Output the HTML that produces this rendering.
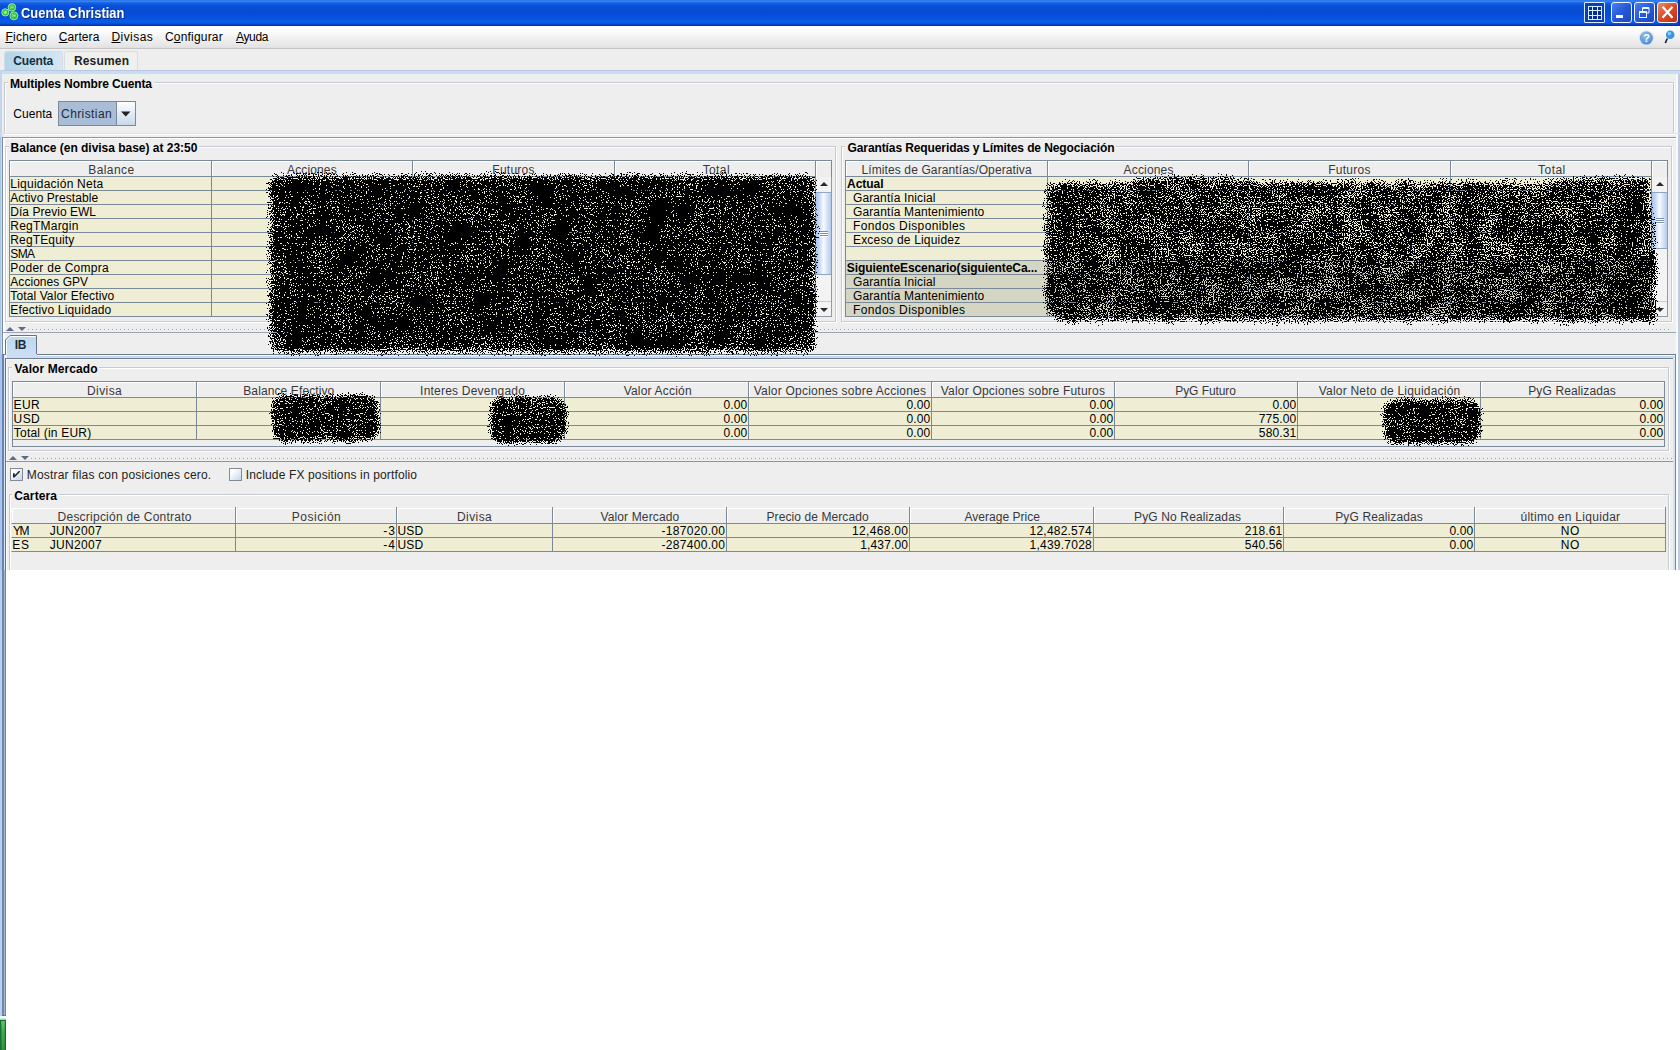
<!DOCTYPE html>
<html><head><meta charset="utf-8"><title>Cuenta Christian</title>
<style>
html,body{margin:0;padding:0;}
body{width:1680px;height:1050px;overflow:hidden;background:#fff;position:relative;font-family:"Liberation Sans",sans-serif;font-size:12px;color:#000;}
div,span{position:absolute;box-sizing:border-box;white-space:pre;}
svg{position:absolute;}
.t{line-height:14px;height:14px;}
.b{font-weight:bold;}
.gb{border:1px solid #c6cbd3;box-shadow:1px 1px 0 #fff, inset 1px 1px 0 #fff;}
.gt{background:#eeeeee;height:14px;}
.vl{background:#7a8a99;width:1px;}
</style></head><body>

<div id="app" style="left:0;top:0;width:1680px;height:570px;background:#eeeeee;"></div>
<div id="titlebar" style="left:0;top:0;width:1680px;height:26px;background:linear-gradient(to bottom,#2468e0 0px,#3a8cf6 1px,#1460e4 3px,#084fd8 6px,#064bd4 12px,#0852de 18px,#0a5cec 22px,#064cd0 24px,#0838b0 25px,#062c98 26px);"></div>
<div style="left:1678px;top:0;width:2px;height:26px;background:#0a34a8;"></div>

<span class="b" style="left:21.48px;top:4px;font-size:14px;line-height:18px;height:18px;color:#fff;text-shadow:1px 1px 0 #0a2a7a;transform:scaleX(0.9226);transform-origin:0 0;">Cuenta Christian</span>
<svg style="left:0;top:0" width="22" height="24" viewBox="0 0 22 24">
<circle cx="11.9" cy="7.4" r="3.8" fill="#2fc22f" stroke="#b4f8dc" stroke-width="0.8"/>
<circle cx="5.3" cy="12.4" r="3.6" fill="#2fc22f" stroke="#b4f8dc" stroke-width="0.8"/>
<circle cx="13.9" cy="15.8" r="4" fill="#2cbc2c" stroke="#b4f8dc" stroke-width="0.8"/>
<circle cx="11.7" cy="7.2" r="1.9" fill="#8cf08c"/><circle cx="5.3" cy="12.4" r="1.8" fill="#8cf08c"/><circle cx="13.7" cy="15.6" r="2" fill="#8cf08c"/>
<path d="M12.8 6.200a1.300 1.300 0 1 0 0 2.200M14.8 14.600a1.300 1.300 0 1 0 0 2.200" stroke="#2fae2f" stroke-width="0.7" fill="none"/>
</svg>

<div style="left:1584px;top:2px;width:21px;height:21px;border:1px solid #d8ecff;border-radius:1px;background:transparent;"></div>
<div style="left:1611px;top:2px;width:21px;height:21px;border:1px solid #f0f6ff;border-radius:3px;background:linear-gradient(135deg,#4a7ef0 0%,#2858d8 50%,#1c48c0 100%);"></div>
<div style="left:1634px;top:2px;width:21px;height:21px;border:1px solid #f0f6ff;border-radius:3px;background:linear-gradient(135deg,#4a7ef0 0%,#2858d8 50%,#1c48c0 100%);"></div>
<div style="left:1657px;top:2px;width:21px;height:21px;border:1px solid #f0f6ff;border-radius:3px;background:linear-gradient(135deg,#f08868 0%,#d84c24 50%,#c03010 100%);"></div>
<div style="left:1585px;top:3px;width:19px;height:19px;background:#0c3eb4;"></div>
<svg style="left:1584px;top:2px" width="21" height="21" viewBox="0 0 21 21"><rect x="4" y="4" width="14" height="14" fill="#0a2c94"/><g stroke="#d4f2ff" stroke-width="1" fill="none"><rect x="4.500" y="4.500" width="13" height="13"/><path d="M8.500 4.500v13M13.500 4.500v13M4.500 8.500h13M4.500 13.500h13"/></g></svg>
<div style="left:1616px;top:15px;width:7px;height:3px;background:#fff;"></div>
<svg style="left:1634px;top:2px" width="21" height="21" viewBox="0 0 21 21"><g stroke="#e8f4ff" stroke-width="1" fill="none"><path d="M8.500 9V5.500H15V11H12.500M8.500 6.500H15"/><rect x="5.500" y="9.500" width="7" height="6"/><path d="M5.500 10.500h7"/></g></svg>
<svg style="left:1657px;top:2px" width="21" height="21" viewBox="0 0 21 21"><path d="M5.500 4.800L15.500 15.800M15.500 4.800L5.500 15.800" stroke="#fff" stroke-width="2.200" fill="none"/></svg>

<div id="menubar" style="left:0;top:26px;width:1680px;height:23px;background:linear-gradient(to bottom,#ffffff 0,#fbfbfb 6px,#eeeeee 14px,#e4e4e4 21px,#dcdcdc 22px);border-bottom:1px solid #c4c4c4;"></div>

<span class="t" style="left:5.4px;top:30px;letter-spacing:0.25px;"><u>F</u>ichero</span>
<span class="t" style="left:58.78px;top:30px;letter-spacing:0.1px;"><u>C</u>artera</span>
<span class="t" style="left:111.4px;top:30px;letter-spacing:0.46px;"><u>D</u>ivisas</span>
<span class="t" style="left:164.98px;top:30px;letter-spacing:0.19px;">C<u>o</u>nfigurar</span>
<span class="t" style="left:236px;top:30px;letter-spacing:-0.35px;"><u>A</u>yuda</span>
<svg style="left:1637px;top:29px" width="20" height="20" viewBox="0 0 20 20"><defs><radialGradient id="hg" cx="0.4" cy="0.3" r="0.8"><stop offset="0" stop-color="#8cbcec"/><stop offset="1" stop-color="#4a86cc"/></radialGradient></defs><circle cx="9.400" cy="9.100" r="7.600" fill="#dfe3ea"/><circle cx="9.400" cy="9.100" r="6.500" fill="url(#hg)"/><text x="9.400" y="13.200" font-family="Liberation Sans" font-weight="bold" font-size="11.500" fill="#fff" text-anchor="middle">?</text></svg>
<svg style="left:1660px;top:28px" width="18" height="20" viewBox="0 0 18 20"><circle cx="10.200" cy="6.800" r="4.300" fill="#3a96e4"/><circle cx="9.400" cy="5.600" r="1.800" fill="#8ccaf8"/><path d="M7.300 10.500L5.300 15" stroke="#1a2030" stroke-width="1.700"/></svg>

<div style="left:4px;top:51px;width:59px;height:20px;border:1px solid #d4dce8;border-bottom:none;border-radius:3px 3px 0 0;background:linear-gradient(to right,#b3d4e9,#d6e6f2);"></div>
<div style="left:64px;top:51px;width:74px;height:20px;border:1px solid #d8dce4;border-bottom:none;border-radius:3px 3px 0 0;background:#f0f0ee;"></div>

<span class="t b" style="left:13.3px;top:54px;letter-spacing:-0.15px;color:#12303f;">Cuenta</span>
<span class="t b" style="left:73.89px;top:54px;letter-spacing:0.19px;color:#222;">Resumen</span>
<div style="left:0;top:70px;width:1680px;height:7px;background:linear-gradient(to bottom,#b9c9dd 0,#b9c9dd 1px,#ccdaf5 1px,#ccdaf5 4px,#e6f2f0 4px,#ecf0ea 7px);"></div>
<div style="left:0;top:70px;width:2px;height:67px;background:#c5d5ee;"></div>
<div style="left:0;top:137px;width:1px;height:221px;background:#aac6e2;"></div>
<div style="left:1px;top:137px;width:1px;height:221px;background:#c4dcf0;"></div>
<div style="left:0;top:354px;width:2px;height:662px;background:#a8c4f0;"></div>
<div style="left:2px;top:354px;width:2px;height:662px;background:#6b82a8;"></div>
<div style="left:4px;top:358px;width:1px;height:212px;background:#d8e4f8;"></div>
<div style="left:5px;top:358px;width:1px;height:212px;background:#63748c;"></div>
<div style="left:6px;top:359px;width:1px;height:211px;background:#fbfdff;"></div>
<div style="left:1676px;top:74px;width:2px;height:496px;background:#f6fbff;"></div>
<div style="left:1678px;top:74px;width:2px;height:496px;background:#c0ccdc;"></div>
<div style="left:1673px;top:359px;width:2px;height:211px;background:#d6e2ee;"></div>
<div style="left:1675px;top:354px;width:1px;height:216px;background:#7088a0;"></div>

<div class="gb" style="left:4px;top:82px;width:1670px;height:52px;"></div>
<div class="gt" style="left:8px;top:77px;width:146px;"></div>
<span class="t b" style="left:9.99px;top:77px;letter-spacing:-0.12px;">Multiples Nombre Cuenta</span>
<span class="t" style="left:13.18px;top:107px;letter-spacing:0.07px;">Cuenta</span>
<div style="left:58px;top:101px;width:78px;height:25px;border:1px solid #7a8a99;background:linear-gradient(to bottom,#fdfeff,#c8d8ea);"></div>
<div style="left:59px;top:102px;width:58px;height:23px;background:#a9bdd6;border-right:1px solid #7a8a99;"></div>
<span class="t" style="left:61.08px;top:107px;letter-spacing:0.4px;color:#1a2a3a;">Christian</span>
<svg style="left:120px;top:111px" width="12" height="7" viewBox="0 0 12 7"><path d="M1 0.5h9.500L5.75 5.5z" fill="#222"/></svg>

<div style="left:0px;top:133px;width:1680px;height:1px;background:#dde2ea;"></div>
<div style="left:2px;top:137px;width:1674px;height:1px;background:#8a98a8;"></div>
<div style="left:3px;top:138px;width:1673px;height:1px;background:#fff;"></div>
<div style="left:2px;top:137px;width:1px;height:217px;background:#7a8ca4;"></div>
<div style="left:3px;top:138px;width:2px;height:216px;background:#fff;"></div>

<div class="gb" style="left:5px;top:146px;width:831px;height:176px;"></div>
<div class="gt" style="left:9px;top:141px;width:190px;"></div>
<span class="t b" style="left:10.59px;top:141px;letter-spacing:-0.02px;">Balance (en divisa base) at 23:50</span>
<div style="left:9px;top:160px;width:807px;height:17px;background:#eeeeee;border-top:1px solid #7a8a99;border-left:1px solid #7a8a99;border-bottom:1px solid #7a8a99;"></div>
<div style="left:10px;top:161px;width:201px;height:15px;border-left:1px solid #fff;border-top:1px solid #fff;"></div>
<div class="vl" style="left:211px;top:160px;height:17px;"></div>
<span class="t" style="left:88.3px;top:163px;letter-spacing:0.41px;color:#383838;">Balance</span>
<div style="left:212px;top:161px;width:200px;height:15px;border-left:1px solid #fff;border-top:1px solid #fff;"></div>
<div class="vl" style="left:412px;top:160px;height:17px;"></div>
<span class="t" style="left:287px;top:163px;letter-spacing:0.14px;color:#383838;">Acciones</span>
<div style="left:413px;top:161px;width:201px;height:15px;border-left:1px solid #fff;border-top:1px solid #fff;"></div>
<div class="vl" style="left:614px;top:160px;height:17px;"></div>
<span class="t" style="left:492.3px;top:163px;letter-spacing:0.26px;color:#383838;">Futuros</span>
<div style="left:615px;top:161px;width:200px;height:15px;border-left:1px solid #fff;border-top:1px solid #fff;"></div>
<div class="vl" style="left:815px;top:160px;height:17px;"></div>
<span class="t" style="left:702.65px;top:163px;letter-spacing:0.4px;color:#383838;">Total</span>
<div style="left:9px;top:177px;width:807px;height:14px;background:#efeed4;border-bottom:1px solid #7a8a99;border-left:1px solid #7a8a99;"></div>
<span class="t" style="left:10.3px;top:177px;letter-spacing:0.23px;">Liquidación Neta</span>
<div style="left:9px;top:191px;width:807px;height:14px;background:#efeed4;border-bottom:1px solid #7a8a99;border-left:1px solid #7a8a99;"></div>
<span class="t" style="left:10.3px;top:191px;letter-spacing:0.07px;">Activo Prestable</span>
<div style="left:9px;top:205px;width:807px;height:14px;background:#efeed4;border-bottom:1px solid #7a8a99;border-left:1px solid #7a8a99;"></div>
<span class="t" style="left:10.3px;top:205px;letter-spacing:0.03px;">Día Previo EWL</span>
<div style="left:9px;top:219px;width:807px;height:14px;background:#efeed4;border-bottom:1px solid #7a8a99;border-left:1px solid #7a8a99;"></div>
<span class="t" style="left:10.3px;top:219px;letter-spacing:0.22px;">RegTMargin</span>
<div style="left:9px;top:233px;width:807px;height:14px;background:#efeed4;border-bottom:1px solid #7a8a99;border-left:1px solid #7a8a99;"></div>
<span class="t" style="left:10.3px;top:233px;letter-spacing:0.14px;">RegTEquity</span>
<div style="left:9px;top:247px;width:807px;height:14px;background:#efeed4;border-bottom:1px solid #7a8a99;border-left:1px solid #7a8a99;"></div>
<span class="t" style="left:10.3px;top:247px;letter-spacing:-0.65px;">SMA</span>
<div style="left:9px;top:261px;width:807px;height:14px;background:#efeed4;border-bottom:1px solid #7a8a99;border-left:1px solid #7a8a99;"></div>
<span class="t" style="left:10.3px;top:261px;letter-spacing:0.26px;">Poder de Compra</span>
<div style="left:9px;top:275px;width:807px;height:14px;background:#efeed4;border-bottom:1px solid #7a8a99;border-left:1px solid #7a8a99;"></div>
<span class="t" style="left:10.3px;top:275px;letter-spacing:0.04px;">Acciones GPV</span>
<div style="left:9px;top:289px;width:807px;height:14px;background:#efeed4;border-bottom:1px solid #7a8a99;border-left:1px solid #7a8a99;"></div>
<span class="t" style="left:10.3px;top:289px;letter-spacing:0.11px;">Total Valor Efectivo</span>
<div style="left:9px;top:303px;width:807px;height:14px;background:#efeed4;border-bottom:1px solid #7a8a99;border-left:1px solid #7a8a99;"></div>
<span class="t" style="left:10.3px;top:303px;letter-spacing:0.17px;">Efectivo Liquidado</span>
<div class="vl" style="left:211px;top:177px;height:140px;"></div>
<div class="vl" style="left:412px;top:177px;height:140px;"></div>
<div class="vl" style="left:614px;top:177px;height:140px;"></div>
<div class="vl" style="left:815px;top:177px;height:140px;"></div>
<div style="left:816px;top:160px;width:16px;height:157px;background:#f3f3f3;border-right:1px solid #8d9bab;border-bottom:1px solid #8d9bab;"></div><div style="left:816px;top:160px;width:16px;height:17px;background:#eeeeee;border-top:1px solid #7a8a99;border-right:1px solid #7a8a99;"></div><div style="left:816px;top:161px;width:15px;height:16px;border-top:1px solid #fff;border-left:1px solid #fff;"></div><svg style="left:820px;top:182px" width="8" height="4" viewBox="0 0 8 4"><path d="M0 4L4 0L8 4z" fill="#2a2a2a"/></svg><svg style="left:820px;top:308px" width="8" height="4" viewBox="0 0 8 4"><path d="M0 0L4 4L8 0z" fill="#2a2a2a"/></svg><div style="left:816px;top:301px;width:15px;height:1px;background:#c8ccd4;"></div><div style="left:816px;top:192px;width:15px;height:83px;border-top:1px solid #8fa6c8;border-bottom:1px solid #8fa6c8;background:linear-gradient(to right,#a9c3ec 0,#c9dbf5 25%,#f8faff 50%,#d4e2f6 75%,#b4c9ea 100%);"></div><div style="left:820px;top:231px;width:8px;height:1px;background:#7a8eae;"></div><div style="left:820px;top:232px;width:8px;height:1px;background:#fff;"></div><div style="left:820px;top:233px;width:8px;height:1px;background:#7a8eae;"></div><div style="left:820px;top:234px;width:8px;height:1px;background:#fff;"></div><div style="left:820px;top:235px;width:8px;height:1px;background:#7a8eae;"></div><div style="left:820px;top:236px;width:8px;height:1px;background:#fff;"></div>
<div class="gb" style="left:841px;top:146px;width:831px;height:176px;"></div>
<div class="gt" style="left:845px;top:141px;width:271px;"></div>
<span class="t b" style="left:847.5px;top:141px;letter-spacing:-0.1px;">Garantías Requeridas y Límites de Negociación</span>
<div style="left:845px;top:160px;width:807px;height:17px;background:#eeeeee;border-top:1px solid #7a8a99;border-left:1px solid #7a8a99;border-bottom:1px solid #7a8a99;"></div>
<div style="left:846px;top:161px;width:201px;height:15px;border-left:1px solid #fff;border-top:1px solid #fff;"></div>
<div class="vl" style="left:1047px;top:160px;height:17px;"></div>
<span class="t" style="left:861.4px;top:163px;letter-spacing:0.12px;color:#383838;">Límites de Garantías/Operativa</span>
<div style="left:1048px;top:161px;width:200px;height:15px;border-left:1px solid #fff;border-top:1px solid #fff;"></div>
<div class="vl" style="left:1248px;top:160px;height:17px;"></div>
<span class="t" style="left:1123.6px;top:163px;letter-spacing:0.16px;color:#383838;">Acciones</span>
<div style="left:1249px;top:161px;width:201px;height:15px;border-left:1px solid #fff;border-top:1px solid #fff;"></div>
<div class="vl" style="left:1450px;top:160px;height:17px;"></div>
<span class="t" style="left:1328.25px;top:163px;letter-spacing:0.25px;color:#383838;">Futuros</span>
<div style="left:1451px;top:161px;width:200px;height:15px;border-left:1px solid #fff;border-top:1px solid #fff;"></div>
<div class="vl" style="left:1651px;top:160px;height:17px;"></div>
<span class="t" style="left:1538px;top:163px;letter-spacing:0.48px;color:#383838;">Total</span>
<div style="left:845px;top:177px;width:807px;height:14px;background:#efeed4;border-bottom:1px solid #7a8a99;border-left:1px solid #7a8a99;"></div>
<span class="t b" style="left:847px;top:177px;letter-spacing:-0.04px;">Actual</span>
<div style="left:845px;top:191px;width:807px;height:14px;background:#efeed4;border-bottom:1px solid #7a8a99;border-left:1px solid #7a8a99;"></div>
<span class="t" style="left:853px;top:191px;letter-spacing:0.11px;">Garantía Inicial</span>
<div style="left:845px;top:205px;width:807px;height:14px;background:#efeed4;border-bottom:1px solid #7a8a99;border-left:1px solid #7a8a99;"></div>
<span class="t" style="left:853px;top:205px;letter-spacing:0.12px;">Garantía Mantenimiento</span>
<div style="left:845px;top:219px;width:807px;height:14px;background:#efeed4;border-bottom:1px solid #7a8a99;border-left:1px solid #7a8a99;"></div>
<span class="t" style="left:853px;top:219px;letter-spacing:0.39px;">Fondos Disponibles</span>
<div style="left:845px;top:233px;width:807px;height:14px;background:#efeed4;border-bottom:1px solid #7a8a99;border-left:1px solid #7a8a99;"></div>
<span class="t" style="left:853px;top:233px;letter-spacing:0.18px;">Exceso de Liquidez</span>
<div style="left:845px;top:247px;width:807px;height:14px;background:#efeed4;border-bottom:1px solid #7a8a99;border-left:1px solid #7a8a99;"></div>
<div style="left:845px;top:261px;width:807px;height:14px;background:#d5d5c3;border-bottom:1px solid #7a8a99;border-left:1px solid #7a8a99;"></div>
<span class="t b" style="left:846.8px;top:261px;letter-spacing:-0.09px;">SiguienteEscenario(siguienteCa...</span>
<div style="left:845px;top:275px;width:807px;height:14px;background:#d5d5c3;border-bottom:1px solid #7a8a99;border-left:1px solid #7a8a99;"></div>
<span class="t" style="left:853px;top:275px;letter-spacing:0.11px;">Garantía Inicial</span>
<div style="left:845px;top:289px;width:807px;height:14px;background:#d5d5c3;border-bottom:1px solid #7a8a99;border-left:1px solid #7a8a99;"></div>
<span class="t" style="left:853px;top:289px;letter-spacing:0.12px;">Garantía Mantenimiento</span>
<div style="left:845px;top:303px;width:807px;height:14px;background:#d5d5c3;border-bottom:1px solid #7a8a99;border-left:1px solid #7a8a99;"></div>
<span class="t" style="left:853px;top:303px;letter-spacing:0.39px;">Fondos Disponibles</span>
<div class="vl" style="left:1047px;top:177px;height:140px;"></div>
<div class="vl" style="left:1248px;top:177px;height:140px;"></div>
<div class="vl" style="left:1450px;top:177px;height:140px;"></div>
<div class="vl" style="left:1651px;top:177px;height:140px;"></div>
<div style="left:1652px;top:160px;width:16px;height:157px;background:#f3f3f3;border-right:1px solid #8d9bab;border-bottom:1px solid #8d9bab;"></div><div style="left:1652px;top:160px;width:16px;height:17px;background:#eeeeee;border-top:1px solid #7a8a99;border-right:1px solid #7a8a99;"></div><div style="left:1652px;top:161px;width:15px;height:16px;border-top:1px solid #fff;border-left:1px solid #fff;"></div><svg style="left:1656px;top:182px" width="8" height="4" viewBox="0 0 8 4"><path d="M0 4L4 0L8 4z" fill="#2a2a2a"/></svg><svg style="left:1656px;top:308px" width="8" height="4" viewBox="0 0 8 4"><path d="M0 0L4 4L8 0z" fill="#2a2a2a"/></svg><div style="left:1652px;top:301px;width:15px;height:1px;background:#c8ccd4;"></div><div style="left:1652px;top:192px;width:15px;height:57px;border-top:1px solid #8fa6c8;border-bottom:1px solid #8fa6c8;background:linear-gradient(to right,#a9c3ec 0,#c9dbf5 25%,#f8faff 50%,#d4e2f6 75%,#b4c9ea 100%);"></div><div style="left:1656px;top:218px;width:8px;height:1px;background:#7a8eae;"></div><div style="left:1656px;top:219px;width:8px;height:1px;background:#fff;"></div><div style="left:1656px;top:220px;width:8px;height:1px;background:#7a8eae;"></div><div style="left:1656px;top:221px;width:8px;height:1px;background:#fff;"></div><div style="left:1656px;top:222px;width:8px;height:1px;background:#7a8eae;"></div><div style="left:1656px;top:223px;width:8px;height:1px;background:#fff;"></div>
<div style="left:28px;top:329px;width:1644px;height:1px;background:repeating-linear-gradient(to right,#9aa2ae 0,#9aa2ae 1px,transparent 1px,transparent 4px);"></div><svg style="left:6px;top:326px" width="22" height="6" viewBox="0 0 22 6"><path d="M0 5L4 1L8 5z" fill="#5a6a8a"/><path d="M12 1L16 5L20 1z" fill="#5a6a8a"/></svg>
<div style="left:3px;top:332px;width:1673px;height:1px;background:#9aa6b4;"></div>
<div style="left:7px;top:336px;width:30px;height:22px;background:linear-gradient(to bottom,#bedaf0,#c8ddf3 70%,#cfdcf4);clip-path:polygon(3px 0,100% 0,100% 100%,0 100%,0 3px);"></div>
<svg style="left:5px;top:335px" width="33" height="24" viewBox="0 0 33 24"><path d="M0.5 19V5L5 0.5H31.5V19" stroke="#63748c" fill="none"/><path d="M1.500 19V5.500L5.500 1.500H30.5" stroke="#fbfdff" fill="none"/></svg>
<div style="left:2px;top:354px;width:4px;height:1px;background:#6b82a8;"></div>
<div style="left:37px;top:354px;width:1639px;height:1px;background:#6c7b8c;"></div>
<div style="left:37px;top:355px;width:1638px;height:1px;background:#f0fbff;"></div>
<div style="left:37px;top:356px;width:1638px;height:2px;background:#c9dbf2;"></div>
<div style="left:5px;top:358px;width:1668px;height:1px;background:#6e8098;"></div>
<div style="left:6px;top:359px;width:1667px;height:1px;background:#f2f8ff;"></div>

<span class="t b" style="left:14.79px;top:338px;letter-spacing:-0.33px;color:#1a2a3a;">IB</span>
<div class="gb" style="left:8px;top:367px;width:1661px;height:84px;"></div>
<div class="gt" style="left:12px;top:362px;width:87px;"></div>
<span class="t b" style="left:14.44px;top:362px;letter-spacing:0.09px;">Valor Mercado</span>
<div style="left:12px;top:381px;width:1653px;height:66px;border:1px solid #7a8a99;"></div>
<div style="left:12px;top:381px;width:1653px;height:17px;background:#eeeeee;border-top:1px solid #7a8a99;border-left:1px solid #7a8a99;border-bottom:1px solid #7a8a99;"></div>
<div style="left:13px;top:382px;width:183px;height:15px;border-left:1px solid #fff;border-top:1px solid #fff;"></div>
<div class="vl" style="left:196px;top:381px;height:17px;"></div>
<span class="t" style="left:87px;top:384px;letter-spacing:0.41px;color:#383838;">Divisa</span>
<div style="left:197px;top:382px;width:183px;height:15px;border-left:1px solid #fff;border-top:1px solid #fff;"></div>
<div class="vl" style="left:380px;top:381px;height:17px;"></div>
<span class="t" style="left:243.25px;top:384px;letter-spacing:0.11px;color:#383838;">Balance Efectivo</span>
<div style="left:381px;top:382px;width:183px;height:15px;border-left:1px solid #fff;border-top:1px solid #fff;"></div>
<div class="vl" style="left:564px;top:381px;height:17px;"></div>
<span class="t" style="left:420.12px;top:384px;letter-spacing:0.21px;color:#383838;">Interes Devengado</span>
<div style="left:565px;top:382px;width:183px;height:15px;border-left:1px solid #fff;border-top:1px solid #fff;"></div>
<div class="vl" style="left:748px;top:381px;height:17px;"></div>
<span class="t" style="left:623.69px;top:384px;letter-spacing:0.19px;color:#383838;">Valor Acción</span>
<div style="left:749px;top:382px;width:182px;height:15px;border-left:1px solid #fff;border-top:1px solid #fff;"></div>
<div class="vl" style="left:931px;top:381px;height:17px;"></div>
<span class="t" style="left:753.69px;top:384px;letter-spacing:0.23px;color:#383838;">Valor Opciones sobre Acciones</span>
<div style="left:932px;top:382px;width:182px;height:15px;border-left:1px solid #fff;border-top:1px solid #fff;"></div>
<div class="vl" style="left:1114px;top:381px;height:17px;"></div>
<span class="t" style="left:940.69px;top:384px;letter-spacing:0.21px;color:#383838;">Valor Opciones sobre Futuros</span>
<div style="left:1115px;top:382px;width:182px;height:15px;border-left:1px solid #fff;border-top:1px solid #fff;"></div>
<div class="vl" style="left:1297px;top:381px;height:17px;"></div>
<span class="t" style="left:1175.25px;top:384px;letter-spacing:-0.07px;color:#383838;">PyG Futuro</span>
<div style="left:1298px;top:382px;width:182px;height:15px;border-left:1px solid #fff;border-top:1px solid #fff;"></div>
<div class="vl" style="left:1480px;top:381px;height:17px;"></div>
<span class="t" style="left:1318.69px;top:384px;letter-spacing:0.21px;color:#383838;">Valor Neto de Liquidación</span>
<div style="left:1481px;top:382px;width:183px;height:15px;border-left:1px solid #fff;border-top:1px solid #fff;"></div>
<div class="vl" style="left:1664px;top:381px;height:17px;"></div>
<span class="t" style="left:1528.25px;top:384px;letter-spacing:0.12px;color:#383838;">PyG Realizadas</span>
<div style="left:12px;top:398px;width:1653px;height:14px;background:#efeed4;border-bottom:1px solid #7a8a99;border-left:1px solid #7a8a99;"></div>
<span class="t" style="left:13.6px;top:398px;letter-spacing:0.42px;">EUR</span>
<span class="t" style="left:723.38px;top:398px;letter-spacing:0.15px;">0.00</span>
<span class="t" style="left:906.38px;top:398px;letter-spacing:0.15px;">0.00</span>
<span class="t" style="left:1089.38px;top:398px;letter-spacing:0.15px;">0.00</span>
<span class="t" style="left:1272.38px;top:398px;letter-spacing:0.15px;">0.00</span>
<span class="t" style="left:1639.38px;top:398px;letter-spacing:0.15px;">0.00</span>
<div style="left:12px;top:412px;width:1653px;height:14px;background:#efeed4;border-bottom:1px solid #7a8a99;border-left:1px solid #7a8a99;"></div>
<span class="t" style="left:13.6px;top:412px;letter-spacing:0.42px;">USD</span>
<span class="t" style="left:723.38px;top:412px;letter-spacing:0.15px;">0.00</span>
<span class="t" style="left:906.38px;top:412px;letter-spacing:0.15px;">0.00</span>
<span class="t" style="left:1089.38px;top:412px;letter-spacing:0.15px;">0.00</span>
<span class="t" style="left:1258.76px;top:412px;letter-spacing:0.15px;">775.00</span>
<span class="t" style="left:1639.38px;top:412px;letter-spacing:0.15px;">0.00</span>
<div style="left:12px;top:426px;width:1653px;height:14px;background:#efeed4;border-bottom:1px solid #7a8a99;border-left:1px solid #7a8a99;"></div>
<span class="t" style="left:13.8px;top:426px;letter-spacing:0.21px;">Total (in EUR)</span>
<span class="t" style="left:723.38px;top:426px;letter-spacing:0.15px;">0.00</span>
<span class="t" style="left:906.38px;top:426px;letter-spacing:0.15px;">0.00</span>
<span class="t" style="left:1089.38px;top:426px;letter-spacing:0.15px;">0.00</span>
<span class="t" style="left:1258.82px;top:426px;letter-spacing:0.15px;">580.31</span>
<span class="t" style="left:1639.38px;top:426px;letter-spacing:0.15px;">0.00</span>
<div class="vl" style="left:196px;top:398px;height:42px;"></div>
<div class="vl" style="left:380px;top:398px;height:42px;"></div>
<div class="vl" style="left:564px;top:398px;height:42px;"></div>
<div class="vl" style="left:748px;top:398px;height:42px;"></div>
<div class="vl" style="left:931px;top:398px;height:42px;"></div>
<div class="vl" style="left:1114px;top:398px;height:42px;"></div>
<div class="vl" style="left:1297px;top:398px;height:42px;"></div>
<div class="vl" style="left:1480px;top:398px;height:42px;"></div>
<div class="vl" style="left:1664px;top:398px;height:42px;"></div>
<div style="left:31px;top:458px;width:1641px;height:1px;background:repeating-linear-gradient(to right,#9aa2ae 0,#9aa2ae 1px,transparent 1px,transparent 4px);"></div><svg style="left:9px;top:455px" width="22" height="6" viewBox="0 0 22 6"><path d="M0 5L4 1L8 5z" fill="#5a6a8a"/><path d="M12 1L16 5L20 1z" fill="#5a6a8a"/></svg>
<div style="left:6px;top:461px;width:1667px;height:1px;background:#8a96a6;"></div>
<div style="left:10px;top:468px;width:13px;height:13px;border:1px solid #858a92;background:linear-gradient(135deg,#ffffff 20%,#c4d6ea);"></div>
<svg style="left:10px;top:468px" width="13" height="13" viewBox="0 0 13 13"><path d="M3 5.200V9.600H4.500L9.900 4V3H8.800L4.700 7.300V5.200Z" fill="#16262c"/></svg>
<div style="left:229px;top:468px;width:13px;height:13px;border:1px solid #858a92;background:linear-gradient(135deg,#ffffff 20%,#c4d6ea);"></div>

<span class="t" style="left:26.8px;top:468px;letter-spacing:0.19px;color:#222;">Mostrar filas con posiciones cero.</span>
<span class="t" style="left:245.78px;top:468px;letter-spacing:0.14px;color:#222;">Include FX positions in portfolio</span>
<div class="gb" style="left:9px;top:494px;width:1660px;height:80px;border-bottom:none;"></div>
<div class="gt" style="left:12px;top:489px;width:47px;"></div>
<span class="t b" style="left:14.3px;top:489px;letter-spacing:0.11px;">Cartera</span>
<div style="left:11px;top:507px;width:1655px;height:17px;background:#eeeeee;border-top:1px solid #eeeeee;border-left:1px solid #eeeeee;border-bottom:1px solid #7a8a99;"></div>
<div style="left:12px;top:508px;width:223px;height:15px;border-left:1px solid #fff;border-top:1px solid #fff;"></div>
<div class="vl" style="left:235px;top:507px;height:17px;"></div>
<span class="t" style="left:57.6px;top:510px;letter-spacing:0.23px;color:#383838;">Descripción de Contrato</span>
<div style="left:236px;top:508px;width:160px;height:15px;border-left:1px solid #fff;border-top:1px solid #fff;"></div>
<div class="vl" style="left:396px;top:507px;height:17px;"></div>
<span class="t" style="left:291.8px;top:510px;letter-spacing:0.52px;color:#383838;">Posición</span>
<div style="left:397px;top:508px;width:155px;height:15px;border-left:1px solid #fff;border-top:1px solid #fff;"></div>
<div class="vl" style="left:552px;top:507px;height:17px;"></div>
<span class="t" style="left:457px;top:510px;letter-spacing:0.41px;color:#383838;">Divisa</span>
<div style="left:553px;top:508px;width:173px;height:15px;border-left:1px solid #fff;border-top:1px solid #fff;"></div>
<div class="vl" style="left:726px;top:507px;height:17px;"></div>
<span class="t" style="left:600.44px;top:510px;letter-spacing:0.14px;color:#383838;">Valor Mercado</span>
<div style="left:727px;top:508px;width:182px;height:15px;border-left:1px solid #fff;border-top:1px solid #fff;"></div>
<div class="vl" style="left:909px;top:507px;height:17px;"></div>
<span class="t" style="left:766.5px;top:510px;letter-spacing:0.09px;color:#383838;">Precio de Mercado</span>
<div style="left:910px;top:508px;width:183px;height:15px;border-left:1px solid #fff;border-top:1px solid #fff;"></div>
<div class="vl" style="left:1093px;top:507px;height:17px;"></div>
<span class="t" style="left:964.5px;top:510px;letter-spacing:0.03px;color:#383838;">Average Price</span>
<div style="left:1094px;top:508px;width:189px;height:15px;border-left:1px solid #fff;border-top:1px solid #fff;"></div>
<div class="vl" style="left:1283px;top:507px;height:17px;"></div>
<span class="t" style="left:1134px;top:510px;letter-spacing:0.14px;color:#383838;">PyG No Realizadas</span>
<div style="left:1284px;top:508px;width:190px;height:15px;border-left:1px solid #fff;border-top:1px solid #fff;"></div>
<div class="vl" style="left:1474px;top:507px;height:17px;"></div>
<span class="t" style="left:1335.25px;top:510px;letter-spacing:0.12px;color:#383838;">PyG Realizadas</span>
<div style="left:1475px;top:508px;width:190px;height:15px;border-left:1px solid #fff;border-top:1px solid #fff;"></div>
<div class="vl" style="left:1665px;top:507px;height:17px;"></div>
<span class="t" style="left:1520.44px;top:510px;letter-spacing:0.29px;color:#383838;">último en Liquidar</span>
<div style="left:11px;top:524px;width:1655px;height:14px;background:#efeed4;border-bottom:1px solid #7a8a99;border-left:1px solid #eeeeee;"></div>
<span class="t" style="left:13.05px;top:524px;letter-spacing:-1.65px;">YM</span>
<span class="t" style="left:383.25px;top:524px;letter-spacing:1.12px;">-3</span>
<span class="t" style="left:397.46px;top:524px;letter-spacing:0.15px;">USD</span>
<span class="t" style="left:661.5px;top:524px;letter-spacing:0.31px;">-187020.00</span>
<span class="t" style="left:852.06px;top:524px;letter-spacing:0.32px;">12,468.00</span>
<span class="t" style="left:1029.56px;top:524px;letter-spacing:0.22px;">12,482.574</span>
<span class="t" style="left:1244.82px;top:524px;letter-spacing:0.15px;">218.61</span>
<span class="t" style="left:1449.38px;top:524px;letter-spacing:0.15px;">0.00</span>
<span class="t" style="left:1560.75px;top:524px;letter-spacing:0.56px;">NO</span>
<div style="left:11px;top:538px;width:1655px;height:14px;background:#efeed4;border-bottom:1px solid #7a8a99;border-left:1px solid #eeeeee;"></div>
<span class="t" style="left:12.3px;top:538px;letter-spacing:0.66px;">ES</span>
<span class="t" style="left:383.25px;top:538px;letter-spacing:0.94px;">-4</span>
<span class="t" style="left:397.46px;top:538px;letter-spacing:0.15px;">USD</span>
<span class="t" style="left:661.5px;top:538px;letter-spacing:0.31px;">-287400.00</span>
<span class="t" style="left:860.31px;top:538px;letter-spacing:0.13px;">1,437.00</span>
<span class="t" style="left:1029.56px;top:538px;letter-spacing:0.24px;">1,439.7028</span>
<span class="t" style="left:1244.82px;top:538px;letter-spacing:0.15px;">540.56</span>
<span class="t" style="left:1449.38px;top:538px;letter-spacing:0.15px;">0.00</span>
<span class="t" style="left:1560.75px;top:538px;letter-spacing:0.56px;">NO</span>
<div class="vl" style="left:235px;top:524px;height:28px;"></div>
<div class="vl" style="left:396px;top:524px;height:28px;"></div>
<div class="vl" style="left:552px;top:524px;height:28px;"></div>
<div class="vl" style="left:726px;top:524px;height:28px;"></div>
<div class="vl" style="left:909px;top:524px;height:28px;"></div>
<div class="vl" style="left:1093px;top:524px;height:28px;"></div>
<div class="vl" style="left:1283px;top:524px;height:28px;"></div>
<div class="vl" style="left:1474px;top:524px;height:28px;"></div>
<div class="vl" style="left:1665px;top:524px;height:28px;"></div>
<span class="t" style="left:49.81px;top:524px;letter-spacing:0.29px;">JUN2007</span>
<span class="t" style="left:49.81px;top:538px;letter-spacing:0.29px;">JUN2007</span>
<svg id="spray" style="left:0;top:0" width="1680" height="600" viewBox="0 0 1680 600"><defs>
<filter id="sp1" filterUnits="userSpaceOnUse" x="0" y="150" width="1680" height="320" color-interpolation-filters="sRGB">
<feGaussianBlur in="SourceAlpha" stdDeviation="4.5" result="A"/>
<feTurbulence type="fractalNoise" baseFrequency="0.83" numOctaves="1" seed="7" result="T"/>
<feColorMatrix in="T" type="matrix" values="0 0 0 0 0  0 0 0 0 0  0 0 0 0 0  3 0 0 0 -1" result="N"/>
<feTurbulence type="fractalNoise" baseFrequency="0.045" numOctaves="2" seed="9" result="L"/>
<feColorMatrix in="L" type="matrix" values="0 0 0 0 0  0 0 0 0 0  0 0 0 0 0  0 2.5 0 0 -0.75" result="LN"/>
<feComposite in="A" in2="N" operator="arithmetic" k1="0" k2="1.4" k3="-1" k4="0" result="C1"/>
<feComposite in="C1" in2="LN" operator="arithmetic" k1="0" k2="1" k3="-0.22" k4="0.11" result="C"/>
<feComponentTransfer in="C"><feFuncA type="discrete" tableValues="0 1"/><feFuncR type="linear" slope="0"/><feFuncG type="linear" slope="0"/><feFuncB type="linear" slope="0"/></feComponentTransfer>
</filter>
<filter id="sp2" filterUnits="userSpaceOnUse" x="0" y="150" width="1680" height="320" color-interpolation-filters="sRGB">
<feGaussianBlur in="SourceAlpha" stdDeviation="4.5" result="A"/>
<feTurbulence type="fractalNoise" baseFrequency="0.83" numOctaves="1" seed="11" result="T"/>
<feColorMatrix in="T" type="matrix" values="0 0 0 0 0  0 0 0 0 0  0 0 0 0 0  3 0 0 0 -1" result="N"/>
<feTurbulence type="fractalNoise" baseFrequency="0.05" numOctaves="2" seed="13" result="L"/>
<feColorMatrix in="L" type="matrix" values="0 0 0 0 0  0 0 0 0 0  0 0 0 0 0  0 2.5 0 0 -0.75" result="LN"/>
<feComposite in="A" in2="N" operator="arithmetic" k1="0" k2="1.31" k3="-1" k4="0" result="C1"/>
<feComposite in="C1" in2="LN" operator="arithmetic" k1="0" k2="1" k3="-0.32" k4="0.16" result="C"/>
<feComponentTransfer in="C"><feFuncA type="discrete" tableValues="0 1"/><feFuncR type="linear" slope="0"/><feFuncG type="linear" slope="0"/><feFuncB type="linear" slope="0"/></feComponentTransfer>
</filter>
<filter id="sp3" filterUnits="userSpaceOnUse" x="0" y="150" width="1680" height="320" color-interpolation-filters="sRGB">
<feGaussianBlur in="SourceAlpha" stdDeviation="3.8" result="A"/>
<feTurbulence type="fractalNoise" baseFrequency="0.83" numOctaves="1" seed="5" result="T"/>
<feColorMatrix in="T" type="matrix" values="0 0 0 0 0  0 0 0 0 0  0 0 0 0 0  3 0 0 0 -1" result="N"/>
<feTurbulence type="fractalNoise" baseFrequency="0.06" numOctaves="2" seed="7" result="L"/>
<feColorMatrix in="L" type="matrix" values="0 0 0 0 0  0 0 0 0 0  0 0 0 0 0  0 2.5 0 0 -0.75" result="LN"/>
<feComposite in="A" in2="N" operator="arithmetic" k1="0" k2="1.4" k3="-1" k4="0" result="C1"/>
<feComposite in="C1" in2="LN" operator="arithmetic" k1="0" k2="1" k3="-0.25" k4="0.125" result="C"/>
<feComponentTransfer in="C"><feFuncA type="discrete" tableValues="0 1"/><feFuncR type="linear" slope="0"/><feFuncG type="linear" slope="0"/><feFuncB type="linear" slope="0"/></feComponentTransfer>
</filter>
<linearGradient id="g2" gradientUnits="userSpaceOnUse" x1="1044" y1="0" x2="1660" y2="0"><stop offset="0" stop-color="#000" stop-opacity="1"/><stop offset="0.12" stop-color="#000" stop-opacity="0.97"/><stop offset="0.5" stop-color="#000" stop-opacity="0.95"/><stop offset="0.8" stop-color="#000" stop-opacity="0.95"/><stop offset="0.9" stop-color="#000" stop-opacity="1"/><stop offset="1" stop-color="#000" stop-opacity="1"/></linearGradient>
</defs>
<rect x="268" y="174" width="549" height="180" rx="8" fill="#000" filter="url(#sp1)"/>
<path d="M1044 181 H1120 L1150 175 H1225 L1250 180 H1540 L1580 176 H1651 L1653 200 L1658 260 V323 H1066 Q1046 322 1044 302 Z" fill="url(#g2)" filter="url(#sp2)"/>
<rect x="271" y="394" width="109" height="49" rx="13" fill="#000" filter="url(#sp3)"/>
<rect x="488" y="396" width="80" height="48" rx="15" fill="#000" filter="url(#sp3)"/>
<rect x="1382" y="398" width="100" height="47" rx="15" fill="#000" filter="url(#sp3)"/>
</svg>
<div style="left:6px;top:570px;width:1674px;height:480px;background:#fff;"></div>
<div style="left:0;top:570px;width:2px;height:446px;background:#b8d0f0;"></div>
<div style="left:2px;top:570px;width:2px;height:446px;background:#6e86a8;"></div>
<div style="left:4px;top:570px;width:1px;height:446px;background:#a8b8cc;"></div>
<div style="left:5px;top:570px;width:1px;height:446px;background:#7088a8;"></div>
<div style="left:2px;top:1015px;width:4px;height:1px;background:#6078a0;"></div>
<div style="left:0;top:1016px;width:6px;height:2px;background:#f4fcf8;"></div>
<div style="left:0;top:1018px;width:6px;height:1px;background:#c8f0dc;"></div>
<div style="left:0;top:1019px;width:6px;height:1px;background:#8edcb0;"></div>
<div style="left:0;top:1020px;width:6px;height:30px;background:linear-gradient(to right,#1a7030 0,#1a7030 1px,#46aa56 2px,#3fa650 4px,#2c8c3c 5px,#1a6a2a 5px,#1a6a2a 6px);"></div>
<div style="left:1px;top:1021px;width:4px;height:29px;background:linear-gradient(to bottom,rgba(120,220,140,0.45),rgba(0,0,0,0) 40%,rgba(0,40,0,0.18));"></div>
<div style="left:0;top:1020px;width:6px;height:1px;background:#1a6a2a;"></div>

</body></html>
